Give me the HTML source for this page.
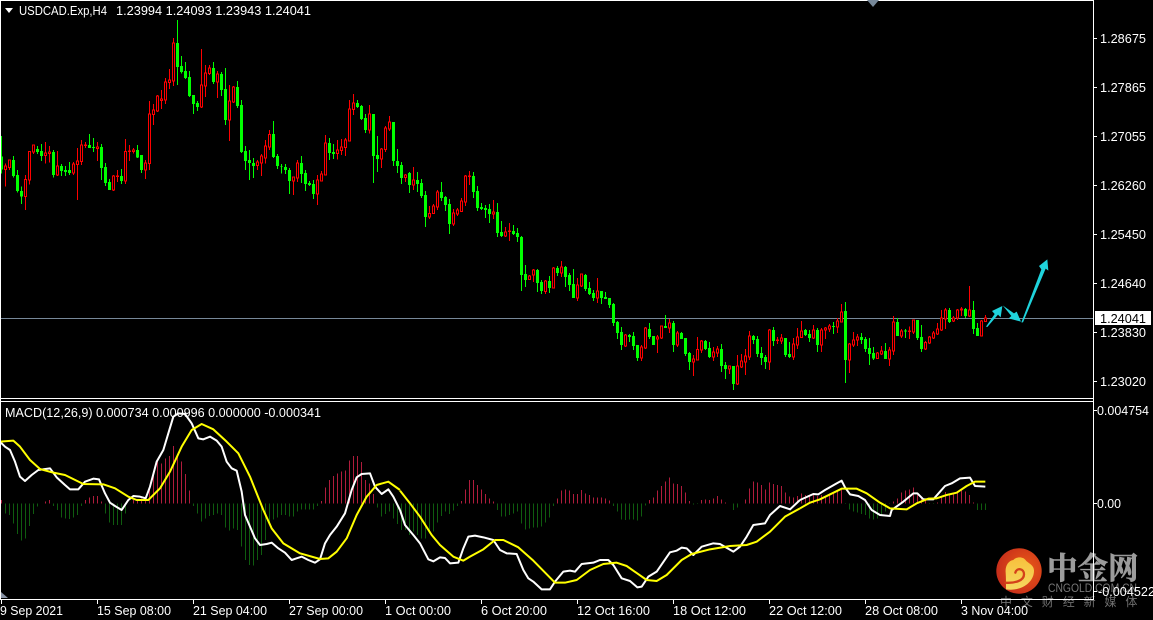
<!DOCTYPE html>
<html><head><meta charset="utf-8"><style>
html,body{margin:0;padding:0;background:#000;width:1153px;height:620px;overflow:hidden}
svg{display:block;position:absolute;left:0;top:0}
text{font-family:"Liberation Sans",sans-serif;font-size:13px;fill:#fff}
.cn{font-family:"Liberation Serif","Noto Serif CJK SC",serif}
.ax text{font-size:13px}
.w{fill:none;stroke-width:3;shape-rendering:crispEdges}
.g{stroke:#0f0}
.r{stroke:#f00}
.gb{fill:none;stroke:#0f0;stroke-width:9;shape-rendering:crispEdges}
.rb{fill:#000;stroke:#f00;stroke-width:3;shape-rendering:crispEdges}
.hr{fill:none;stroke:#b01c3c;stroke-width:3;shape-rendering:crispEdges}
.hg{fill:none;stroke:#0f5c0f;stroke-width:3;shape-rendering:crispEdges}
.lw{fill:none;stroke:#fff;stroke-width:6;stroke-linejoin:round}
.ly{fill:none;stroke:#ff0;stroke-width:6;stroke-linejoin:round}
</style></head><body>
<svg width="1153" height="620" viewBox="0 0 1153 620" xmlns="http://www.w3.org/2000/svg">
<rect width="1153" height="620" fill="#000"/>

<!-- level line -->
<rect x="1" y="318" width="1092" height="1" fill="#778899"/>

<!-- candles A -->
<g transform="translate(.1667,0) scale(.33333)">
<path class="w g" d="M4 408V520M40 468V532M52 510V578M64 560V612M112 438V462M124 432V483M160 450V532M184 492V528M196 498V528M208 486V525M268 402V444M280 414V456M304 432V540M316 489V558M328 537V570M364 507V552M412 435V474M424 465V519M532 60V255M544 168V220M556 186V237M568 213V291M580 285V342M592 303V333M640 186V252M664 216V288M676 204V375M712 243V324M724 300V459M736 438V510M748 450V540M760 474V534M820 363V474M832 462V507M844 492V520M856 492V522M868 504V582M904 468V549M916 510V573M928 543V558M940 540V597M988 414V480M1000 432V477M1072 300V324M1084 315V360M1096 342V399M1120 342V549M1132 408V516M1180 366V498M1192 447V519"/>
<path class="gb" d="M4 470V508M40 480V528M52 525V573M64 573V590M112 447V456M124 453V468M160 456V525M184 498V513M196 510V516M208 510V519M268 435V444M280 441V444M304 441V504M316 501V549M328 546V570M364 528V543M412 450V472M424 465V510M532 129V201M544 198V216M556 213V234M568 231V288M580 285V312M592 309V321M640 204V246M664 222V270M676 267V360M712 261V318M724 315V456M736 453V483M748 480V489M760 489V498M820 402V471M832 468V498M844 498V500M856 501V510M868 510V543M904 489V522M916 519V552M928 549V555M940 552V582M988 429V459M1000 456V462M1072 309V321M1084 318V357M1096 354V390M1120 342V468M1132 465V477M1180 366V483M1192 483V498"/>
<path class="w r" d="M16 490V560M28 478V510M76 525V630M88 454V553M100 435V462M136 426V490M148 438V488M172 453V528M220 486V525M232 444V600M244 420V495M256 426V444M292 426V483M340 525V573M352 510V546M376 417V552M388 435V483M400 444V460M436 480V537M448 303V510M460 312V375M472 285V336M484 270V327M496 234V312M508 207V267M520 114V258M604 147V324M616 195V291M628 195V225M652 213V294M688 255V423M700 258V309M772 480V510M784 462V528M796 420V490M808 390V450M880 531V585M892 480V546M952 525V615M964 513V545M976 405V525M1012 420V478M1024 417V465M1036 414V468M1048 300V423M1060 282V345M1108 315V400M1144 444V504M1156 378V456M1168 348V393"/>
<path class="rb" d="M13 498h6V508h-6zM25 480h6V502h-6zM73 538h6V590h-6zM85 454h6V540h-6zM97 435h6V456h-6zM133 459h6V467h-6zM145 456h6V460h-6zM169 498h6V525h-6zM217 492h6V519h-6zM229 483h6V494h-6zM241 435h6V485h-6zM253 435h6V437h-6zM289 441h6V446h-6zM337 528h6V570h-6zM349 528h6V530h-6zM373 454h6V543h-6zM385 453h6V455h-6zM397 450h6V455h-6zM433 489h6V510h-6zM445 342h6V491h-6zM457 330h6V344h-6zM469 288h6V333h-6zM481 297h6V302h-6zM493 246h6V300h-6zM505 240h6V248h-6zM517 129h6V243h-6zM601 255h6V321h-6zM613 219h6V258h-6zM625 204h6V220h-6zM649 222h6V246h-6zM685 303h6V360h-6zM697 261h6V306h-6zM769 486h6V497h-6zM781 468h6V489h-6zM793 438h6V474h-6zM805 403h6V441h-6zM877 531h6V543h-6zM889 489h6V534h-6zM949 540h6V582h-6zM961 522h6V543h-6zM973 429h6V525h-6zM1009 450h6V461h-6zM1021 441h6V452h-6zM1033 420h6V443h-6zM1045 327h6V423h-6zM1057 309h6V329h-6zM1105 342h6V390h-6zM1141 447h6V477h-6zM1153 384h6V449h-6zM1165 366h6V387h-6z"/>
</g>

<!-- candles B -->
<g transform="translate(400.1667,100) scale(.33333)">
<path class="w g" d="M4 186V252M28 216V279M52 216V276M64 237V294M76 273V381M124 246V303M136 288V333M148 297V402M220 216V294M232 258V333M244 309V330M256 315V354M268 312V369M292 309V411M304 363V411M340 375V405M352 384V426M364 408V573M376 495V561M412 507V576M424 540V582M448 528V579M472 498V528M496 498V561M508 519V573M520 507V594M556 522V573M568 546V585M580 570V603M604 573V612M616 576V597M628 594V624M640 609V678M652 663V717M664 681V750M688 702V726M700 696V750M712 735V783M748 669V717M760 708V735M796 645V684M820 663V756M844 696V717M856 714V768M868 756V810M916 720V750M928 726V774M964 732V816M976 786V837M1000 798V870M1060 705V732M1072 708V771M1084 741V795M1096 765V807M1120 681V738M1156 714V771M1168 726V774"/>
<path class="gb" d="M4 195V234M28 219V255M52 240V252M64 249V288M76 285V351M124 276V294M136 291V315M148 312V372M220 228V276M232 273V324M244 321V327M256 324V330M268 327V342M292 336V399M304 396V408M340 393V402M352 399V411M364 411V525M376 522V540M412 510V549M424 546V573M448 543V564M472 504V519M496 501V531M508 525V555M520 552V594M556 525V567M568 564V582M580 579V594M604 573V594M616 591V597M628 594V615M640 612V669M652 666V699M664 696V735M688 705V711M700 708V738M712 735V774M748 687V711M760 708V735M796 678V684M820 669V735M844 699V717M856 714V762M868 759V786M916 723V747M928 744V771M964 747V798M976 795V807M1000 798V852M1060 708V720M1072 717V762M1084 759V774M1096 771V786M1120 690V723M1156 714V765M1168 762V771"/>
<path class="w r" d="M16 222V246M40 201V270M88 318V357M100 312V342M112 270V330M160 327V378M172 324V348M184 294V336M196 225V318M208 213V255M280 300V357M316 381V411M328 369V423M388 525V540M400 507V546M436 540V582M460 501V564M484 483V531M532 534V603M544 522V561M592 534V609M676 702V741M724 735V783M736 681V747M772 705V759M784 678V717M808 657V699M832 693V741M880 765V828M892 711V780M904 720V759M940 741V783M952 738V771M988 798V822M1012 765V855M1024 762V804M1036 747V825M1048 693V780M1108 687V810M1132 711V732M1144 702V732M1180 714V780M1192 684V747"/>
<path class="rb" d="M13 225h6V233h-6zM37 240h6V255h-6zM85 340h6V351h-6zM97 318h6V341h-6zM109 276h6V321h-6zM157 339h6V372h-6zM169 330h6V342h-6zM181 303h6V334h-6zM193 228h6V306h-6zM205 228h6V230h-6zM277 336h6V342h-6zM313 396h6V408h-6zM325 393h6V395h-6zM385 528h6V539h-6zM397 510h6V525h-6zM433 543h6V575h-6zM457 504h6V564h-6zM481 501h6V519h-6zM529 555h6V594h-6zM541 522h6V558h-6zM589 573h6V594h-6zM673 705h6V738h-6zM721 741h6V774h-6zM733 684h6V744h-6zM769 711h6V717h-6zM781 678h6V714h-6zM805 669h6V684h-6zM829 699h6V735h-6zM877 777h6V786h-6zM889 748h6V780h-6zM901 723h6V750h-6zM937 756h6V771h-6zM949 747h6V759h-6zM985 798h6V807h-6zM1009 798h6V852h-6zM1021 783h6V801h-6zM1033 768h6V786h-6zM1045 708h6V771h-6zM1105 690h6V786h-6zM1129 720h6V722h-6zM1141 714h6V723h-6zM1177 732h6V771h-6zM1189 711h6V735h-6z"/>
</g>

<!-- candles C -->
<g transform="translate(780.1667,230) scale(.33333)">
<path class="w g" d="M76 297V318M88 300V336M112 294V366M160 276V312M196 216V459M244 309V342M256 321V366M268 324V405M280 351V390M316 339V387M352 264V318M376 297V324M412 270V330M424 285V366M508 234V279M556 234V264M580 213V312M592 279V318"/>
<path class="gb" d="M76 300V315M88 312V324M112 300V345M160 288V291M196 243V390M244 321V330M256 327V357M268 354V372M280 369V385M316 363V387M352 276V318M376 302V304M412 270V324M424 321V357M508 240V276M556 237V258M580 240V297M592 294V318"/>
<path class="w r" d="M64 273V324M100 285V327M124 294V366M136 291V327M148 282V306M172 264V309M184 222V276M208 339V429M220 306V351M232 312V348M292 366V387M304 348V375M328 351V408M340 258V375M364 297V324M388 290V327M400 270V312M436 333V360M448 318V342M460 303V327M472 279V315M484 240V303M496 234V297M520 258V276M532 237V270M544 231V258M568 168V261M604 270V318M616 255V276"/>
<path class="rb" d="M61 303h6V322h-6zM97 300h6V324h-6zM121 300h6V345h-6zM133 294h6V300h-6zM145 288h6V297h-6zM169 273h6V291h-6zM181 246h6V276h-6zM205 342h6V390h-6zM217 330h6V345h-6zM229 321h6V330h-6zM289 369h6V385h-6zM301 363h6V372h-6zM325 360h6V387h-6zM337 276h6V363h-6zM361 303h6V318h-6zM385 303h6V305h-6zM397 270h6V306h-6zM433 337h6V357h-6zM445 321h6V339h-6zM457 309h6V324h-6zM469 297h6V312h-6zM481 264h6V300h-6zM493 240h6V267h-6zM517 264h6V273h-6zM529 240h6V264h-6zM541 237h6V240h-6zM565 240h6V258h-6zM601 273h6V318h-6zM613 264h6V275h-6z"/>
</g>

<!-- arrows -->
<g transform="translate(780,230) scale(.33333)" fill="#1fd3dc">
<polygon points="618,290 644,252 636,243 667,228 662,262 654,254 622,291"/>
<polygon points="668,226 702,250 710,245 723,275 686,265 694,258"/>
<polygon points="724,277 784,118 777,108 802,88 805,122 797,116 729,277"/>
</g>

<!-- histogram A -->
<g transform="translate(.1667,400) scale(.33333)">
<path class="hr" d="M4 310V300M136 310V305M148 310V300M256 310V300M268 310V292M280 310V288M292 310V288M304 310V305M400 310V300M412 310V300M424 310V295M436 310V290M448 310V262M460 310V222M472 310V180M484 310V190M496 310V175M508 310V168M520 310V138M532 310V165M544 310V185M556 310V222M568 310V272M964 310V303M976 310V262M988 310V240M1000 310V228M1012 310V220M1024 310V215M1036 310V212M1048 310V182M1060 310V168M1072 310V168M1084 310V186M1096 310V240M1108 310V250M1120 310V282"/>
<path class="hg" d="M16 310V340M28 310V345M40 310V370M52 310V402M64 310V422M76 310V415M88 310V378M100 310V342M112 310V320M160 310V318M172 310V330M184 310V352M196 310V355M208 310V357M220 310V352M232 310V345M244 310V318M316 310V340M328 310V368M340 310V375M352 310V375M364 310V375M376 310V340M580 310V318M592 310V340M604 310V365M616 310V355M628 310V348M640 310V345M652 310V340M664 310V345M676 310V382M688 310V392M700 310V385M712 310V390M724 310V440M736 310V480M748 310V495M760 310V497M772 310V480M784 310V465M796 310V420M808 310V372M820 310V358M832 310V352M844 310V345M856 310V345M868 310V350M880 310V350M892 310V335M904 310V328M916 310V328M928 310V328M940 310V328M952 310V318M1132 310V322M1144 310V350M1156 310V342M1168 310V335M1180 310V355M1192 310V372"/>
</g>
<!-- histogram B -->
<g transform="translate(400.1667,400) scale(.33333)">
<path class="hg" d="M4 310V390M16 310V390M28 310V405M40 310V395M52 310V405M64 310V415M76 310V415M88 310V400M100 310V395M112 310V368M124 310V348M136 310V335M148 310V342M160 310V332M172 310V318M292 310V330M304 310V350M316 310V350M328 310V345M340 310V340M352 310V335M364 310V370M376 310V388M388 310V385M400 310V382M412 310V382M424 310V380M436 310V368M448 310V352M460 310V318M640 310V318M652 310V335M664 310V358M676 310V360M688 310V358M700 310V358M712 310V362M724 310V350M736 310V316M880 310V314M892 310V312M1000 310V330M1012 310V322"/>
<path class="hr" d="M184 310V303M196 310V268M208 310V240M220 310V240M232 310V255M244 310V268M256 310V282M268 310V295M280 310V305M472 310V295M484 310V272M496 310V268M508 310V272M520 310V282M532 310V282M544 310V270M556 310V280M568 310V285M580 310V292M592 310V292M604 310V292M616 310V295M628 310V302M748 310V300M760 310V292M772 310V272M784 310V258M796 310V245M808 310V232M820 310V250M832 310V252M844 310V258M856 310V278M868 310V303M904 310V300M916 310V298M928 310V300M940 310V295M952 310V288M964 310V298M976 310V308M1036 310V298M1048 310V265M1060 310V245M1072 310V248M1084 310V255M1096 310V268M1108 310V248M1120 310V252M1132 310V255M1144 310V258M1156 310V278M1168 310V290M1180 310V292M1192 310V288"/>
</g>
<!-- histogram C -->
<g transform="translate(800.1667,400) scale(.33333)">
<path class="hr" d="M4 310V280M16 310V285M28 310V290M40 310V280M52 310V288M64 310V285M76 310V292M88 310V280M100 310V280M112 310V275M124 310V270M280 310V305M292 310V295M304 310V278M316 310V272M328 310V268M340 310V262M352 310V285M364 310V295M376 310V300M412 310V308M424 310V288M436 310V276M448 310V280M460 310V278M472 310V275M484 310V272M496 310V275M508 310V285M520 310V308"/>
<path class="hg" d="M136 310V312M148 310V328M160 310V335M172 310V338M184 310V342M196 310V345M208 310V355M220 310V358M232 310V355M244 310V348M256 310V335M268 310V312M388 310V312M400 310V312M532 310V330M544 310V330M556 310V330"/>
</g>

<!-- logo under frame -->
<defs>
<radialGradient id="lg" cx=".65" cy=".45" r=".7"><stop offset="0" stop-color="#ea5a18"/><stop offset="1" stop-color="#c42a1a"/></radialGradient>
<linearGradient id="ly" x1="0" y1="0" x2="0" y2="1"><stop offset="0" stop-color="#f7c03c"/><stop offset="1" stop-color="#f6d860"/></linearGradient>
</defs>
<circle cx="1019" cy="571" r="22.7" fill="url(#lg)"/>
<g transform="translate(960,530) scale(.33333)">
<path fill="url(#ly)" d="M138 178C180 185 222 160 222 122C222 105 205 100 198 92C190 78 168 80 160 90C145 92 135 108 137 128C138 142 138 160 138 178Z"/>
<path fill="none" stroke="#d4401a" stroke-width="7" stroke-linecap="round" d="M166 128C170 112 192 115 192 133C192 152 165 160 136 158"/>
</g>
<text class="cn" x="1047" y="579" style="font-size:30.5px;font-weight:700;fill:#9c9c9c;stroke:#9c9c9c;stroke-width:.6px">中金网</text>
<text x="1048" y="592" textLength="89" lengthAdjust="spacingAndGlyphs" style="font-size:11.5px;fill:#777">CNGOLD.COM.CN</text>
<text x="1000" y="606" style="font-family:'Liberation Sans','Noto Sans CJK SC',sans-serif;font-size:12px;fill:#707070;letter-spacing:8.9px">中文财经新媒体</text>

<!-- lines -->
<g transform="translate(0,400) scale(.33333)">
<polyline class="lw" points="0,125 15,140 30,150 45,185 60,230 75,243 95,225 115,210 150,205 170,232 195,255 210,268 235,268 255,245 280,236 297,238 315,280 330,308 345,318 365,330 385,300 400,288 420,290 437,295 450,260 470,185 490,150 505,100 520,50 535,40 555,42 575,70 595,115 610,118 630,110 650,122 665,140 680,185 695,205 710,212 725,275 735,345 750,380 765,415 780,435 800,432 815,428 835,445 855,458 875,480 890,475 905,470 925,480 945,488 960,478 975,430 990,405 1010,380 1035,340 1055,270 1070,232 1085,222 1110,220 1125,260 1145,282 1165,268 1180,290 1200,330"/>
<polyline class="ly" points="0,125 40,122 60,140 90,180 120,207 160,218 195,225 250,252 310,253 345,265 385,290 410,300 445,300 480,265 510,215 545,140 575,90 605,72 640,88 680,125 715,160 750,230 790,330 815,385 850,430 900,460 960,477 985,475 1010,455 1040,415 1070,345 1100,290 1130,255 1165,245 1200,270"/>
</g>
<g transform="translate(400,400) scale(.33333)">
<polyline class="lw" points="0,330 15,375 40,405 60,430 85,478 100,484 120,472 135,474 150,490 175,488 190,445 205,410 225,407 250,412 280,420 300,450 320,460 350,462 370,510 385,535 400,545 425,568 450,568 465,545 490,515 510,512 525,515 545,492 580,488 600,480 625,480 640,495 665,535 690,543 712,562 725,560 745,530 770,515 810,457 830,452 845,443 860,445 880,465 905,440 940,430 960,432 1000,455 1020,440 1040,410 1060,375 1095,370 1110,345 1140,318 1170,328 1200,300"/>
<polyline class="ly" points="0,272 30,310 60,350 95,405 120,435 160,470 190,482 210,470 250,448 285,420 310,420 355,442 400,482 465,548 495,548 530,540 570,510 610,492 650,488 680,498 740,540 770,543 800,525 845,480 875,462 930,448 990,438 1040,435 1070,425 1110,395 1155,350 1200,325"/>
</g>
<g transform="translate(800,400) scale(.33333)">
<polyline class="lw" points="0,300 40,282 55,283 75,270 110,250 125,242 135,262 150,283 175,288 195,300 215,330 240,345 270,348 275,330 310,305 340,280 352,280 370,298 400,298 420,275 435,258 455,250 480,235 510,233 525,258 556,260"/>
<polyline class="ly" points="0,325 30,308 60,298 125,266 170,266 200,280 240,308 270,325 320,328 350,310 385,296 410,295 440,285 470,278 500,258 525,245 556,245"/>
</g>

<!-- frame -->
<g fill="#fff" shape-rendering="crispEdges">
<rect x="0" y="0" width="1094" height="1"/>
<rect x="0" y="0" width="1" height="600"/>
<rect x="1093" y="0" width="1" height="600"/>
<rect x="0" y="398" width="1094" height="1"/>
<rect x="0" y="401" width="1094" height="1"/>
<rect x="0" y="599" width="1094" height="1"/>
<path d="M1093 38h4v1h-4zM1093 87h4v1h-4zM1093 136h4v1h-4zM1093 185h4v1h-4zM1093 234h4v1h-4zM1093 283h4v1h-4zM1093 332h4v1h-4zM1093 381h4v1h-4zM1093 410h4v1h-4zM1093 503h4v1h-4zM1093 591h4v1h-4zM1 600h1v4h-1zM97 600h1v4h-1zM193 600h1v4h-1zM289 600h1v4h-1zM385 600h1v4h-1zM481 600h1v4h-1zM577 600h1v4h-1zM673 600h1v4h-1zM769 600h1v4h-1zM865 600h1v4h-1zM961 600h1v4h-1z"/>
</g>
<polygon points="5,8 13,8 9,13" fill="#fff"/>
<polygon points="867,0 879,0 873,7" fill="#778899"/>
<polygon points="1,592 1,598 8,598" fill="#8a94a6"/>

<!-- current price -->
<rect x="1095" y="311" width="56" height="14" fill="#fff"/>

<g class="ax">
<text x="19" y="15" textLength="88" lengthAdjust="spacingAndGlyphs">USDCAD.Exp,H4</text>
<text x="116" y="15" textLength="195" lengthAdjust="spacingAndGlyphs">1.23994 1.24093 1.23943 1.24041</text>
<text x="5" y="417" textLength="316" lengthAdjust="spacingAndGlyphs">MACD(12,26,9) 0.000734 0.000996 0.000000 -0.000341</text>
<text x="1100" y="43" textLength="46" lengthAdjust="spacingAndGlyphs">1.28675</text>
<text x="1100" y="92" textLength="46" lengthAdjust="spacingAndGlyphs">1.27865</text>
<text x="1100" y="141" textLength="46" lengthAdjust="spacingAndGlyphs">1.27055</text>
<text x="1100" y="190" textLength="46" lengthAdjust="spacingAndGlyphs">1.26260</text>
<text x="1100" y="239" textLength="46" lengthAdjust="spacingAndGlyphs">1.25450</text>
<text x="1100" y="288" textLength="46" lengthAdjust="spacingAndGlyphs">1.24640</text>
<text x="1100" y="323" textLength="46" lengthAdjust="spacingAndGlyphs" style="fill:#000">1.24041</text>
<text x="1100" y="337" textLength="46" lengthAdjust="spacingAndGlyphs">1.23830</text>
<text x="1100" y="386" textLength="46" lengthAdjust="spacingAndGlyphs">1.23020</text>
<text x="1097" y="415" textLength="52" lengthAdjust="spacingAndGlyphs">0.004754</text>
<text x="1097" y="508" textLength="24" lengthAdjust="spacingAndGlyphs">0.00</text>
<text x="1098" y="596" textLength="57" lengthAdjust="spacingAndGlyphs">-0.004522</text>
<text x="0" y="615" textLength="63" lengthAdjust="spacingAndGlyphs">9 Sep 2021</text>
<text x="97" y="615" textLength="74" lengthAdjust="spacingAndGlyphs">15 Sep 08:00</text>
<text x="193" y="615" textLength="74" lengthAdjust="spacingAndGlyphs">21 Sep 04:00</text>
<text x="289" y="615" textLength="74" lengthAdjust="spacingAndGlyphs">27 Sep 00:00</text>
<text x="385" y="615" textLength="66" lengthAdjust="spacingAndGlyphs">1 Oct 00:00</text>
<text x="481" y="615" textLength="66" lengthAdjust="spacingAndGlyphs">6 Oct 20:00</text>
<text x="577" y="615" textLength="73" lengthAdjust="spacingAndGlyphs">12 Oct 16:00</text>
<text x="673" y="615" textLength="73" lengthAdjust="spacingAndGlyphs">18 Oct 12:00</text>
<text x="769" y="615" textLength="73" lengthAdjust="spacingAndGlyphs">22 Oct 12:00</text>
<text x="865" y="615" textLength="73" lengthAdjust="spacingAndGlyphs">28 Oct 08:00</text>
<text x="961" y="615" textLength="67" lengthAdjust="spacingAndGlyphs">3 Nov 04:00</text>
</g>
</svg>
</body></html>
